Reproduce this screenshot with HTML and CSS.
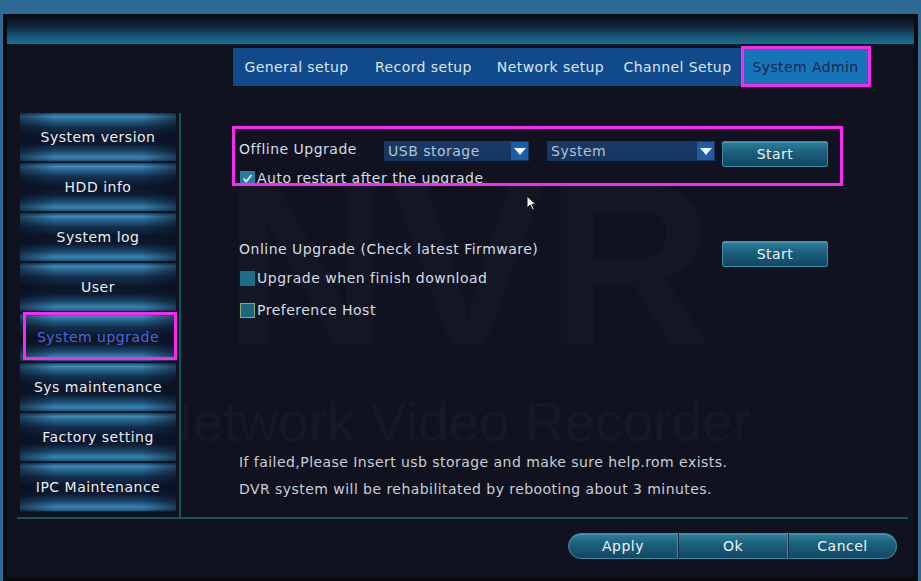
FILE: index.html
```html
<!DOCTYPE html>
<html lang="en">
<head>
<meta charset="utf-8">
<title>System Admin - System upgrade</title>
<link rel="stylesheet" href="styles.css">
</head>
<body>
<div class="window">
  <div class="titlebar"></div>

  <div class="tabs">
    <div class="tab">General setup</div>
    <div class="tab">Record setup</div>
    <div class="tab">Network setup</div>
    <div class="tab">Channel Setup</div>
    <div class="tab active">System Admin</div>
  </div>

  <div class="panel">
    <div class="watermark">
      <div class="wm-logo">NVR</div>
      <div class="wm-name">Network Video Recorder</div>
    </div>

    <nav class="sidebar">
      <div class="side-item">System version</div>
      <div class="side-item">HDD info</div>
      <div class="side-item">System log</div>
      <div class="side-item">User</div>
      <div class="side-item active">System upgrade</div>
      <div class="side-item">Sys maintenance</div>
      <div class="side-item">Factory setting</div>
      <div class="side-item">IPC Maintenance</div>
    </nav>

    <section class="content">
      <div class="offline">
        <div class="row">
          <div class="label label-offline">Offline Upgrade</div>
          <div class="select select-src">
            <span class="select-text">USB storage</span>
            <span class="select-arrow"></span>
          </div>
          <div class="select select-type">
            <span class="select-text">System</span>
            <span class="select-arrow"></span>
          </div>
          <button class="btn-start">Start</button>
        </div>
        <label class="check-row first">
          <span class="check checked">
            <svg viewBox="0 0 15 15" width="15" height="15"><path d="M3.5 7.5 L6.2 10.5 L11.5 4" fill="none" stroke="#d8e6f2" stroke-width="1.8"/></svg>
          </span>
          <span class="check-text">Auto restart after the upgrade</span>
        </label>
      </div>

      <div class="row online">
        <div class="label label-online">Online Upgrade (Check latest Firmware)</div>
        <button class="btn-start">Start</button>
      </div>
      <label class="check-row">
        <span class="check"></span>
        <span class="check-text">Upgrade when finish download</span>
      </label>
      <label class="check-row host">
        <span class="check focus"></span>
        <span class="check-text">Preference Host</span>
      </label>

      <div class="notes">
        <p>If failed,Please Insert usb storage and make sure help.rom exists.</p>
        <p>DVR system will be rehabilitated by rebooting about 3 minutes.</p>
      </div>

      <svg class="pointer" width="11" height="16" viewBox="0 0 11 16">
        <path d="M1 1 L1 13 L4 10 L6.5 15 L8.3 14.2 L5.8 9.3 L9.8 9.3 Z" fill="#f4f4f4" stroke="#111" stroke-width="1"/>
      </svg>
    </section>
  </div>

  <div class="divider"></div>

  <div class="footer">
    <div class="btn-group">
      <button class="seg seg-first">Apply</button>
      <button class="seg">Ok</button>
      <button class="seg seg-last">Cancel</button>
    </div>
  </div>
</div>
</body>
</html>
```

FILE: styles.css
```css
* {
  box-sizing: border-box;
}

html, body {
  margin: 0;
  height: 100%;
}

body {
  background: #2d6b96;
  padding: 14px 3px 0 3px;
  overflow: hidden;
  font-family: "DejaVu Sans", Verdana, sans-serif;
  font-size: 14px;
  letter-spacing: 0.5px;
  color: #d6dce4;
}

.window {
  height: 567px;
  background: #10131f;
  border: solid #090b11;
  border-width: 3px 4px 3px 4px;
  display: flex;
  flex-direction: column;
}

/* window caption strip */
.titlebar {
  height: 28px;
  flex: none;
  background: linear-gradient(to bottom, #0a101c 0%, #0e2133 30%, #145472 70%, #1b6f8f 100%);
  border-bottom: 1px solid #0a1a26;
}

/* top tab strip: equal-width tabs, centred captions */
.tabs {
  margin: 3px 0 0 226px;
  height: 38px;
  display: flex;
  align-self: flex-start;
  background: #114a8b;
  flex: none;
}

.tab {
  width: 127px;
  line-height: 38px;
  text-align: center;
  color: #dce5ee;
  white-space: nowrap;
  letter-spacing: 0.4px;
}

.tab.active {
  position: relative;
  width: 129px;
  background: #1675b8;
  color: #16274a;
}

.tab.active::after {
  content: "";
  position: absolute;
  top: -2px;
  bottom: -1px;
  left: 0;
  right: -1px;
  border: 3px solid #fa28f0;
}

/* sidebar + settings area */
.panel {
  margin-top: 27px;
  height: 404px;
  display: flex;
  position: relative;
  flex: none;
}

.watermark {
  position: absolute;
  left: 0;
  top: 0;
  right: 0;
  bottom: 0;
  pointer-events: none;
  font-family: "Liberation Sans", Arial, sans-serif;
  letter-spacing: 0;
  color: rgba(110, 140, 190, 0.04);
}

.wm-logo {
  position: absolute;
  left: 216px;
  top: 36px;
  font-size: 232px;
  font-weight: bold;
  line-height: 1;
}

.wm-name {
  position: absolute;
  left: 146px;
  top: 282px;
  font-size: 55px;
  line-height: 1;
  color: rgba(110, 140, 190, 0.055);
}

.sidebar {
  position: relative;
  z-index: 1;
  margin-left: 13px;
  width: 161px;
  padding-right: 3px;
  border-right: 2px solid #18535f;
  flex: none;
  background: #10131f;
}

.side-item {
  position: relative;
  width: 156px;
  height: 50px;
  line-height: 48px;
  text-align: center;
  color: #e8eef4;
  letter-spacing: 0.5px;
  white-space: nowrap;
  background:
    linear-gradient(to right, rgba(8, 12, 26, 0.55) 0%, rgba(8, 12, 26, 0) 22%, rgba(8, 12, 26, 0) 78%, rgba(8, 12, 26, 0.55) 100%),
    linear-gradient(to bottom, #1b4a6e 0%, #3c8ab8 7%, #2a6690 14%, #13304f 28%, #0c1529 48%, #0e1a31 62%, #1a4568 76%, #3682b0 88%, #2a6a94 94%, #0a1222 98%, #0a1222 100%);
}

.side-item.active {
  color: #4b68dc;
}

.side-item.active::after {
  content: "";
  position: absolute;
  left: 3px;
  right: -1px;
  top: -1px;
  bottom: 3px;
  border: 3px solid #fa28f0;
}

.content {
  position: relative;
  flex: 1;
  padding: 28px 0 14px 57px;
  display: flex;
  flex-direction: column;
}

.offline {
  position: relative;
}

.offline::after {
  content: "";
  position: absolute;
  left: -6px;
  top: -15px;
  width: 605px;
  height: 54px;
  border: 3px solid #fa28f0;
  pointer-events: none;
}

.row {
  display: flex;
  align-items: flex-start;
  height: 26px;
}

.label {
  flex: none;
  line-height: 16px;
  white-space: nowrap;
}

.label-offline {
  width: 146px;
  padding-left: 1px;
}

.label-online {
  width: 484px;
  padding-left: 1px;
}

.select {
  flex: none;
  height: 20px;
  display: flex;
  align-items: stretch;
  background: linear-gradient(to bottom, #1a3a66 0%, #173460 100%);
}

.select-src {
  width: 145px;
}

.select-type {
  width: 168px;
  margin-left: 18px;
}

.select-text {
  flex: 1;
  padding-left: 4px;
  line-height: 21px;
  color: #b3c2d4;
  white-space: nowrap;
}

.select-arrow {
  width: 17px;
  margin: 1px 1px 1px 0;
  background: #1d5ca6;
  display: flex;
  align-items: center;
  justify-content: center;
}

.select-arrow::before {
  content: "";
  border-left: 6px solid transparent;
  border-right: 6px solid transparent;
  border-top: 7px solid #f2f6fb;
}

.btn-start {
  flex: none;
  margin-left: 7px;
  width: 106px;
  height: 26px;
  border: 1px solid #3a8aa8;
  border-radius: 2px;
  background: linear-gradient(to bottom, #2e7f9c 0%, #1a5e7c 45%, #124862 100%);
  color: #eef4f8;
  font: inherit;
  letter-spacing: 0.5px;
  padding: 0;
  box-shadow: inset 0 1px 0 rgba(120, 200, 230, 0.35);
}

.online {
  margin-top: 55px;
}

.online .btn-start {
  margin-left: 0;
}

.check-row {
  display: flex;
  align-items: center;
  margin-top: 3px;
  margin-left: 2px;
  height: 16px;
}

.check-row.host {
  margin-top: 16px;
}

.check {
  flex: none;
  width: 15px;
  height: 15px;
  background: #1d6d8a;
  margin-right: 2px;
  display: block;
}

.check svg {
  display: block;
}

.check.checked {
  background: #2a7da0;
}

.check.focus {
  border: 1px solid #86ad6e;
  background: #1c6583;
}

.check-text {
  line-height: 16px;
  white-space: nowrap;
}

.notes {
  margin-top: auto;
  padding-left: 1px;
  letter-spacing: 0.45px;
  font-size: 14px;
  color: #c9ced6;
}

.notes p {
  margin: 0;
  line-height: 27px;
}

.pointer {
  position: absolute;
  left: 345px;
  top: 82px;
}

.divider {
  margin-left: 10px;
  width: 891px;
  height: 2px;
  background: #18535f;
  flex: none;
}

.footer {
  display: flex;
  justify-content: flex-end;
  padding: 14px 17px 0 0;
}

.btn-group {
  display: flex;
}

.seg {
  width: 110px;
  height: 26px;
  padding: 0;
  border: 1px solid #3a8aa8;
  border-left-width: 0;
  background: linear-gradient(to bottom, #2e7f9c 0%, #1a5e7c 45%, #124862 100%);
  box-shadow: inset 0 1px 0 rgba(120, 200, 230, 0.35);
  color: #eef4f8;
  font: inherit;
  letter-spacing: 0.5px;
}

.seg + .seg {
  border-left: 1px solid #0d2e40;
}

.seg-first {
  border-left-width: 1px;
  border-radius: 13px 0 0 13px;
}

.seg-last {
  width: 109px;
  border-radius: 0 13px 13px 0;
}
```
